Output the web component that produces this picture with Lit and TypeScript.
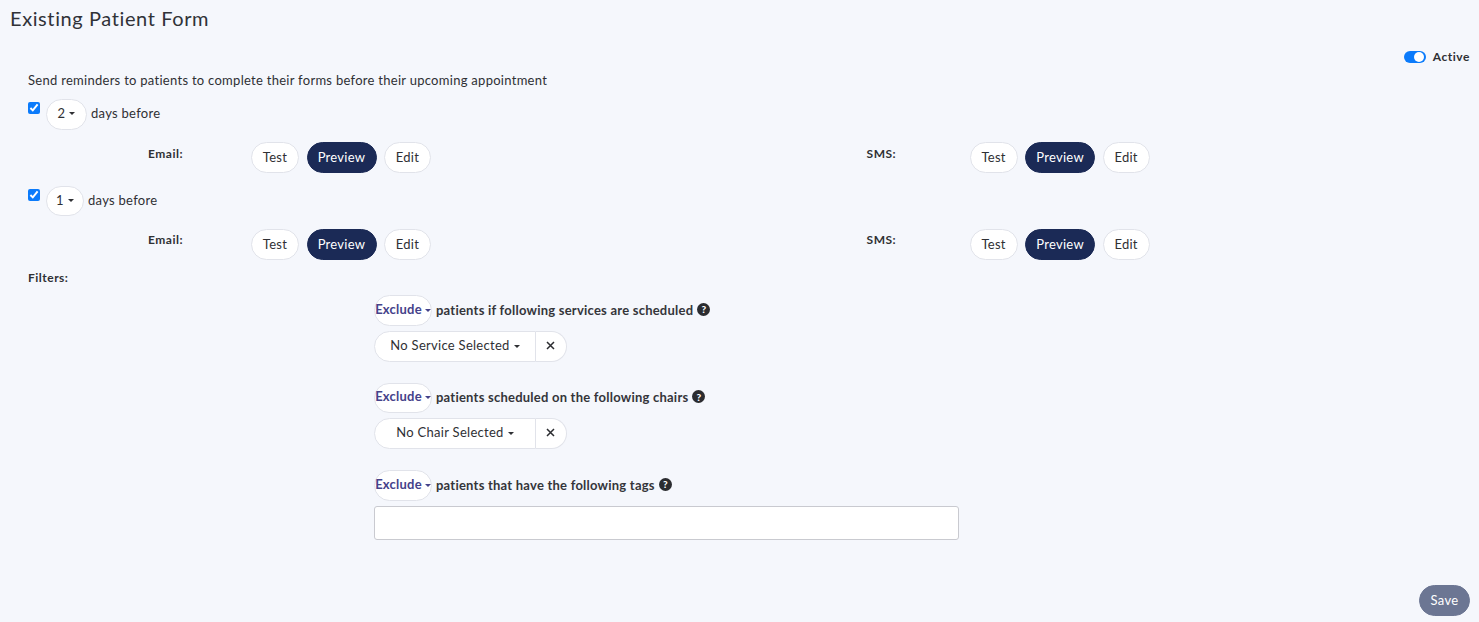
import { LitElement, css, html } from 'lit'

const caret = html`<span class="caret"></span>`

class AppRoot extends LitElement {
  static styles = css`
    :host {
      display: block;
      height: 622px;
      overflow: hidden;
      background: #f5f7fc;
      color: #2f3034;
      font-family: Lato, 'Open Sans', sans-serif;
      font-size: 13px;
      letter-spacing: 0.28px;
    }

    button {
      font: inherit;
      letter-spacing: inherit;
      color: inherit;
      margin: 0;
      padding: 0 0 2px;
      background: #fff;
      border: 1px solid #e1e3ea;
      border-radius: 16px;
    }

    .page {
      display: flex;
      flex-direction: column;
      height: 622px;
      box-sizing: border-box;
    }

    h1 {
      margin: 0;
      padding: 6px 0 0 10px;
      height: 31px;
      font-size: 20px;
      line-height: 24px;
      font-weight: 400;
      letter-spacing: 0.6px;
      color: #303238;
    }

    .status {
      display: flex;
      justify-content: flex-end;
      align-items: center;
      gap: 7px;
      height: 16px;
      margin-top: 12px;
      padding-right: 9px;
      font-size: 12px;
      font-weight: 700;
      letter-spacing: 0.55px;
    }

    .status span:last-child {
      margin-bottom: 2px;
    }

    .toggle {
      display: flex;
      justify-content: flex-end;
      align-items: center;
      box-sizing: border-box;
      width: 22px;
      height: 12px;
      padding-right: 2px;
      border-radius: 6px;
      background: #0b7bfb;
    }

    .toggle::after {
      content: '';
      width: 10px;
      height: 10px;
      border-radius: 50%;
      background: #fff;
    }

    .desc {
      margin: 6px 0 0 28px;
      line-height: 18px;
    }

    .days {
      display: flex;
      align-items: center;
      height: 31px;
      padding-left: 28px;
    }

    .days input {
      width: 12px;
      height: 12px;
      margin: 3px 6px 0 0;
      align-self: flex-start;
      accent-color: #0b7bfb;
    }

    .days button {
      height: 100%;
      margin-right: 4px;
      padding-bottom: 3px;
    }

    .days span {
      margin-bottom: 3px;
    }

    .first {
      margin-top: 10px;
    }

    .second {
      height: 30px;
      margin-top: 13px;
    }

    .second span {
      margin-bottom: 2px;
    }

    .num-2 {
      width: 41px;
    }

    .num-1 {
      width: 38px;
    }

    .caret {
      display: inline-block;
      width: 0;
      height: 0;
      margin-left: 4px;
      vertical-align: middle;
      border-top: 3px solid currentColor;
      border-left: 3px solid transparent;
      border-right: 3px solid transparent;
    }

    .channels {
      display: grid;
      grid-template-columns: 103px 615.6px 103px auto;
      margin: 12px 0 0 148px;
      height: 31px;
    }

    .second + .channels {
      margin-top: 13px;
    }

    .channels .label {
      font-weight: 700;
      font-size: 12px;
      line-height: 24px;
      letter-spacing: 0.5px;
    }

    .second + .channels .label {
      line-height: 22px;
    }

    .actions {
      display: flex;
      gap: 7.5px;
    }

    .actions button {
      height: 31px;
    }

    .test {
      width: 48px;
    }

    .preview {
      width: 70px;
      background: #1b2a56;
      border-color: #1b2a56;
      color: #fff;
    }

    .edit {
      width: 47px;
    }

    .filters-label {
      margin: 9px 0 0 28px;
      font-weight: 700;
      font-size: 12px;
      line-height: 18px;
      letter-spacing: 0.5px;
    }

    .filters {
      display: flex;
      flex-direction: column;
      gap: 21px;
      margin: 8px 0 0 374px;
      width: 585px;
    }

    .heading {
      display: flex;
      align-items: center;
      height: 31px;
      font-weight: 700;
      letter-spacing: 0.23px;
      color: #34353a;
    }

    .heading > span:first-of-type {
      margin-bottom: 2px;
    }

    .short {
      height: 30px;
    }

    .exclude {
      flex: none;
      width: 58px;
      height: 100%;
      margin-right: 4px;
      padding-bottom: 4px;
      color: #45428a;
      font-weight: 700;
      white-space: nowrap;
    }

    .exclude .caret {
      margin-left: 3px;
    }

    .help {
      flex: none;
      display: inline-flex;
      align-items: center;
      justify-content: center;
      width: 13px;
      height: 13px;
      margin: 0 0 3px 4px;
      border-radius: 50%;
      background: #2b2c30;
      color: #fff;
      font-size: 10px;
      font-weight: 900;
      letter-spacing: 0;
    }

    .select {
      display: flex;
      width: 193px;
      height: 31px;
      margin-top: 5px;
    }

    .select button {
      height: 31px;
    }

    .select .main {
      width: 162px;
      padding-bottom: 3px;
      border-radius: 16px 0 0 16px;
    }

    .select .clear {
      display: flex;
      align-items: center;
      justify-content: center;
      width: 31px;
      padding: 0 1px 3px 0;
      border-left: 0;
      border-radius: 0 16px 16px 0;
    }

    .tags {
      display: block;
      box-sizing: border-box;
      width: 585px;
      height: 34px;
      margin-top: 5px;
      background: #fff;
      border: 1px solid #c9cad0;
      border-radius: 3px;
    }

    .footer {
      display: flex;
      justify-content: flex-end;
      margin-top: auto;
      padding: 0 9px 6px 0;
    }

    .save {
      width: 51px;
      height: 31px;
      background: #6c7693;
      border-color: #6c7693;
      color: #fff;
    }
  `

  private channel(label: string) {
    return html`
      <div class="label">${label}:</div>
      <div class="actions">
        <button class="test">Test</button>
        <button class="preview">Preview</button>
        <button class="edit">Edit</button>
      </div>
    `
  }

  private reminder(days: number, cls: string) {
    return html`
      <div class="days ${cls}">
        <input type="checkbox" checked />
        <button class="num-${days}">${days}${caret}</button>
        <span>days before</span>
      </div>
      <div class="channels">${this.channel('Email')}${this.channel('SMS')}</div>
    `
  }

  private heading(text: string, cls = '') {
    return html`
      <div class="heading ${cls}">
        <button class="exclude">Exclude${caret}</button>
        <span>${text}</span>
        <span class="help">?</span>
      </div>
    `
  }

  private select(text: string) {
    return html`
      <div class="select">
        <button class="main">${text}${caret}</button>
        <button class="clear">
          <svg width="9" height="9" viewBox="0 0 9 9">
            <path d="M1 1l7 7M8 1l-7 7" stroke="#2b2c30" stroke-width="1.5" fill="none" />
          </svg>
        </button>
      </div>
    `
  }

  render() {
    return html`
      <div class="page">
        <h1>Existing Patient Form</h1>
        <div class="status"><span class="toggle"></span><span>Active</span></div>
        <div class="desc">Send reminders to patients to complete their forms before their upcoming appointment</div>
        ${this.reminder(2, 'first')}
        ${this.reminder(1, 'second')}
        <div class="filters-label">Filters:</div>
        <div class="filters">
          <div>${this.heading('patients if following services are scheduled')}${this.select('No Service Selected')}</div>
          <div>${this.heading('patients scheduled on the following chairs', 'short')}${this.select('No Chair Selected')}</div>
          <div>${this.heading('patients that have the following tags')}<input class="tags" /></div>
        </div>
        <div class="footer"><button class="save">Save</button></div>
      </div>
    `
  }
}

customElements.define('app-root', AppRoot)
